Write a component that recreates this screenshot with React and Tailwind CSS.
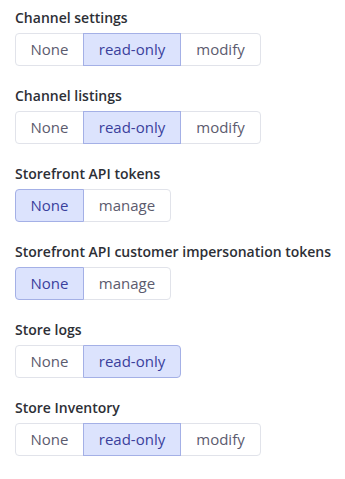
const groups = [
  { label: 'Channel settings', options: ['None', 'read-only', 'modify'], selected: 1 },
  { label: 'Channel listings', options: ['None', 'read-only', 'modify'], selected: 1 },
  { label: 'Storefront API tokens', options: ['None', 'manage'], selected: 0 },
  { label: 'Storefront API customer impersonation tokens', options: ['None', 'manage'], selected: 0 },
  { label: 'Store logs', options: ['None', 'read-only'], selected: 1 },
  { label: 'Store Inventory', options: ['None', 'read-only', 'modify'], selected: 1 },
];

const widths = {
  None: 'w-[69px]',
  'read-only': 'w-[98px]',
  modify: 'w-[81px]',
  manage: 'w-[88px]',
};

function Segmented({ options, selected }) {
  return (
    <div className="flex">
      {options.map((opt, i) => {
        const active = i === selected;
        const first = i === 0;
        const last = i === options.length - 1;
        return (
          <button
            key={opt}
            className={[
              'h-[33px] text-[15px] border flex items-center justify-center',
              widths[opt],
              first ? 'rounded-l-[4px]' : '-ml-px',
              last ? 'rounded-r-[4px]' : '',
              active
                ? 'bg-[#dce3fd] border-[#a4b0e6] text-[#3a3f9c] relative z-10'
                : 'bg-white border-[#e1e3ea] text-[#5c5b6e]',
            ].join(' ')}
          >
            {opt}
          </button>
        );
      })}
    </div>
  );
}

export default function App() {
  return (
    <main className="min-h-screen bg-white px-[15px] pt-[7px] font-['Source_Sans_Pro','Open_Sans',sans-serif]">
      <div className="flex flex-col gap-[19px]">
        {groups.map((g) => (
          <div key={g.label} className="flex flex-col">
            <div className="text-[14px] font-semibold text-[#2d2f36] h-[26px] leading-[22px] whitespace-nowrap">{g.label}</div>
            <Segmented options={g.options} selected={g.selected} />
          </div>
        ))}
      </div>
    </main>
  );
}
